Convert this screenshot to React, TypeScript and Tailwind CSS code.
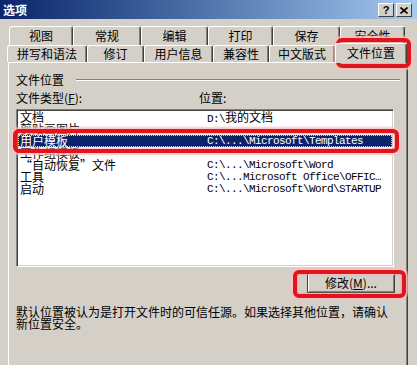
import React from 'react';

const row1 = [
  { label: '视图', w: 64 },
  { label: '常规', w: 68 },
  { label: '编辑', w: 67 },
  { label: '打印', w: 65 },
  { label: '保存', w: 67 },
  { label: '安全性', w: 65 },
];

const row2 = [
  { label: '拼写和语法', w: 80 },
  { label: '修订', w: 57 },
  { label: '用户信息', w: 69 },
  { label: '兼容性', w: 56 },
  { label: '中文版式', w: 66 },
];

const items = [
  { name: '文档', path: 'D:\\', cjk: '我的文档' },
  { name: '剪贴画图片', path: '' },
  { name: '用户模板', path: 'C:\\...\\Microsoft\\Templates', selected: true },
  { name: '工作组模板', path: '' },
  { name: '“自动恢复”文件', path: 'C:\\...\\Microsoft\\Word' },
  { name: '工具', path: 'C:\\...Microsoft Office\\OFFIC…' },
  { name: '启动', path: 'C:\\...\\Microsoft\\Word\\STARTUP' },
];

function Tab({ label, w, h }: { label: string; w: number; h: string }) {
  return (
    <div
      style={{ width: w }}
      className={`${h} flex items-center justify-center border-l border-t border-white border-r border-r-[#404040] shadow-[inset_-1px_0_0_#808080] rounded-t-[3px] text-[12px] leading-[12px] text-black`}
    >
      {label}
    </div>
  );
}

function Highlight({ cls }: { cls: string }) {
  return (
    <div
      className={`absolute ${cls} border-[4px] border-[#e0141c] rounded-[6px] shadow-[0_0_2px_2px_rgba(255,190,190,0.9),inset_0_0_2px_1px_rgba(255,150,150,0.7)] pointer-events-none`}
    />
  );
}

export default function App() {
  return (
    <div className="relative w-[417px] h-[365px] overflow-hidden bg-[#d4d0c8] flex flex-col font-['Noto_Sans_CJK_SC',sans-serif] text-black">
      {/* title bar */}
      <div className="h-[19px] shrink-0 flex items-center justify-between pl-[3px] pr-[5px] bg-gradient-to-r from-[#0a246a] to-[#a6caf0]">
        <span className="text-white font-bold text-[12px] leading-[12px]">选项</span>
        <div className="flex gap-[2px] mt-[1px]">
          <div className="w-[16px] h-[14px] bg-[#d4d0c8] border border-t-white border-l-white border-r-[#404040] border-b-[#404040] flex items-center justify-center text-[11px] leading-[11px] font-bold font-['Liberation_Sans',sans-serif]">
            ?
          </div>
          <div className="w-[16px] h-[14px] bg-[#d4d0c8] border border-t-white border-l-white border-r-[#404040] border-b-[#404040] flex items-center justify-center">
            <svg width="8" height="7" viewBox="0 0 8 7">
              <path d="M0.5 0.5 L7.5 6.5 M7.5 0.5 L0.5 6.5" stroke="#000" strokeWidth="1.6" />
            </svg>
          </div>
        </div>
      </div>

      {/* tabs */}
      <div className="pt-[7px] shrink-0">
        <div className="flex ml-[9px]">
          {row1.map((t) => (
            <Tab key={t.label} label={t.label} w={t.w} h="h-[19px]" />
          ))}
        </div>
        <div className="flex items-end ml-[7px] h-[17px]">
          {row2.map((t) => (
            <Tab key={t.label} label={t.label} w={t.w} h="h-[17px]" />
          ))}
          <div className="relative z-10 w-[72px] h-[20px] -mb-[1px] bg-[#d4d0c8] flex items-center justify-center border-l border-t border-white border-r border-r-[#404040] shadow-[inset_-1px_0_0_#808080] rounded-t-[3px] text-[12px] leading-[12px] pb-[2px]">
            文件位置
          </div>
        </div>
      </div>

      {/* panel */}
      <div className="flex-1 ml-[8px] w-[400px] border-l border-t border-white border-r border-r-[#404040] shadow-[inset_-1px_0_0_#808080] pl-[7px] pr-[7px] pt-[11px] text-[12px] leading-[12px]">
        <div className="flex items-center h-[12px]">
          <span className="w-[48px]">文件位置</span>
          <div className="ml-[12px] flex-1 h-[2px] border-t border-[#808080] border-b border-b-white" />
        </div>

        <div className="flex mt-[6px] h-[12px]">
          <span className="w-[183px]">
            文件类型(<span className="underline">F</span>):
          </span>
          <span>位置:</span>
        </div>

        <div className="mt-[5px] w-[378px] h-[158px] bg-white border border-t-[#808080] border-l-[#808080] border-r-white border-b-white shadow-[inset_1px_1px_0_#404040,inset_-1px_-1px_0_#d4d0c8] p-[1px]">
          {items.map((it) => (
            <div
              key={it.name}
              className={`flex h-[12px] leading-[12px] whitespace-nowrap ${
                it.selected ? 'bg-[#0a246a] text-white outline outline-1 outline-dotted outline-[#d8d8a0] -outline-offset-1' : ''
              }`}
            >
              <span className="w-[189px] pl-[2px]">{it.name}</span>
              <span className="font-['Liberation_Mono',monospace] text-[11px] tracking-[-0.6px]">
                {it.path}
                {it.cjk && (
                  <span className="font-['Noto_Sans_CJK_SC',sans-serif] text-[12px] tracking-normal">{it.cjk}</span>
                )}
              </span>
            </div>
          ))}
        </div>

        <div className="flex justify-end pr-[5px] mt-[6px]">
          <button className="w-[88px] h-[20px] bg-[#d4d0c8] border border-t-white border-l-[#404040] border-r-[#404040] border-b-[#404040] shadow-[inset_1px_1px_0_#ffffff,inset_-1px_-1px_0_#808080] flex items-center justify-center text-[12px] leading-[12px]">
            修改(<span className="underline">M</span>)...
          </button>
        </div>

        <p className="mt-[13px] text-[12px] leading-[12px] w-[384px]">
          默认位置被认为是打开文件时的可信任源。如果选择其他位置，请确认
          <br />
          新位置安全。
        </p>
      </div>

      {/* red annotation boxes */}
      <Highlight cls="left-[336px] top-[38px] w-[75px] h-[30px]" />
      <Highlight cls="left-[13px] top-[129px] w-[386px] h-[24px]" />
      <Highlight cls="left-[293px] top-[270px] w-[113px] h-[28px]" />
    </div>
  );
}
